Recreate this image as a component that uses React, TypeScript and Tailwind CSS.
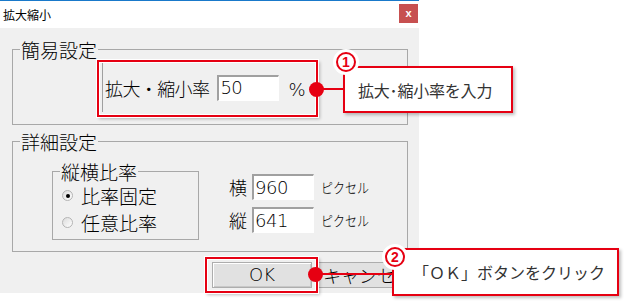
import React from 'react';

const RED = 'border-[#e60012]';
const THIN = "font-['DejaVu_Sans',sans-serif] font-extralight";

function Field({ value }: { value: string }) {
  return (
    <div className={`w-[62px] h-[26px] bg-white border-t-2 border-l-2 border-t-[#a0a0a0] border-l-[#a0a0a0] border-b border-r border-b-white border-r-white flex items-center pl-[1px] text-[18px] leading-none text-black tracking-[-0.5px] ${THIN}`}>
      {value}
    </div>
  );
}

function Radio({ checked, label }: { checked?: boolean; label: string }) {
  return (
    <div className="flex items-center h-[27px]">
      <div className="w-[11px] h-[11px] rounded-full border border-[#b4b4b4] bg-gradient-to-br from-[#dcdcdc] to-white flex items-center justify-center">
        {checked && <div className="w-[4px] h-[4px] rounded-full bg-black" />}
      </div>
      <span className="ml-[8px] text-[19px] leading-none">{label}</span>
    </div>
  );
}

function Group({ label, className, children }: { label: string; className: string; children: React.ReactNode }) {
  return (
    <div className={`relative border border-[#a8a8a8] ${className}`}>
      <span className="absolute -top-[10px] left-[7px] px-[1px] bg-[#f0f0f0] text-[19px] leading-[19px]">{label}</span>
      {children}
    </div>
  );
}

function Badge({ n, className }: { n: string; className: string }) {
  return (
    <div className={`absolute w-[26px] h-[26px] rounded-full bg-white flex items-center justify-center ${className}`}>
      <div className="w-[20px] h-[20px] rounded-full border-2 border-[#e60012] flex items-center justify-center text-[#e60012] font-bold text-[14px] leading-none font-['Liberation_Sans',sans-serif]">
        {n}
      </div>
    </div>
  );
}

export default function App() {
  return (
    <div className="relative w-[625px] h-[301px] bg-white overflow-hidden text-black font-light font-['Noto_Sans_CJK_JP',sans-serif]">
      {/* dialog window */}
      <div className="w-[419px] border-t border-[#1979ca]">
        <div className="h-[27px] flex items-center justify-between pl-[3px]">
          <span className="text-[12px] leading-none font-normal">拡大縮小</span>
          <div className="w-[19px] h-[19px] mr-[1px] mt-[-3px] bg-[#c75050] flex items-center justify-center text-white text-[11px] font-bold leading-none font-['Liberation_Sans',sans-serif]">
            x
          </div>
        </div>
        <div className="h-[265px] bg-[#f0f0f0] pl-[12px] pt-[21px] flex flex-col">
          <Group label="簡易設定" className="w-[396px] h-[76px]">
            <div className="ml-[89px] mt-[12px] w-[212px] h-[50px] border-l border-t border-[#a0a0a0] flex items-center">
              <span className="ml-[2px] text-[18px] leading-none tracking-[-0.6px]">拡大・縮小率</span>
              <div className="ml-[8px]">
                <Field value="50" />
              </div>
              <span className={`ml-[9px] mt-[4px] text-[18px] leading-none ${THIN}`}>%</span>
            </div>
          </Group>

          <Group label="詳細設定" className="mt-[16px] w-[396px] h-[111px]">
            <div className="flex">
              <Group label="縦横比率" className="ml-[39px] mt-[29px] w-[147px] h-[69px]">
                <div className="pl-[9px] pt-[10px]">
                  <Radio checked label="比率固定" />
                  <Radio label="任意比率" />
                </div>
              </Group>
              <div className="ml-[30px] mt-[32px] flex flex-col gap-[7px]">
                <div className="flex items-center">
                  <span className="text-[18px] leading-none w-[23px]">横</span>
                  <Field value="960" />
                  <span className="ml-[7px] text-[12px] leading-none scale-y-[1.15] origin-left">ピクセル</span>
                </div>
                <div className="flex items-center">
                  <span className="text-[18px] leading-none w-[23px]">縦</span>
                  <Field value="641" />
                  <span className="ml-[7px] text-[12px] leading-none scale-y-[1.15] origin-left">ピクセル</span>
                </div>
              </div>
            </div>
          </Group>

          <div className="mt-[10px] ml-[200px] flex gap-[6px]">
            <div className={`w-[100px] h-[26px] bg-[#e1e1e1] border border-[#adadad] shadow-[inset_1px_1px_0_white,inset_-1px_-1px_0_#c8c8c8] flex items-center justify-center text-[18px] leading-none ${THIN}`}>
              OK
            </div>
            <div className="w-[100px] h-[26px] bg-[#e1e1e1] border border-[#adadad] flex items-center justify-center text-[18px] leading-none">
              キャンセル
            </div>
          </div>
        </div>
      </div>

      {/* annotation: highlight 1 */}
      <div className={`absolute left-[97px] top-[60px] w-[221px] h-[57px] border-2 ${RED} shadow-[0_0_0_1px_white,2px_2px_3px_rgba(0,0,0,0.25)]`}>
        <div className="w-full h-full border border-white" />
      </div>
      <div className="absolute left-[317px] top-[88px] w-[28px] h-[2px] bg-[#e60012]" />
      <div className="absolute left-[309px] top-[82px] w-[15px] h-[15px] rounded-full bg-[#e60012]" />
      <div className={`absolute left-[343px] top-[66px] w-[170px] h-[47px] bg-white border-2 ${RED} shadow-[2px_2px_3px_rgba(0,0,0,0.25)] flex items-center pl-[13px] text-[16px] leading-none font-normal text-[#333] tracking-[-0.2px]`}>
        拡大･縮小率を入力
      </div>
      <Badge n="1" className="left-[333px] top-[49px]" />

      {/* annotation: highlight 2 */}
      <div className={`absolute left-[205px] top-[257px] w-[113px] h-[36px] border-2 ${RED} shadow-[0_0_0_1px_white,2px_2px_3px_rgba(0,0,0,0.25)]`}>
        <div className="w-full h-full border border-white" />
      </div>
      <div className="absolute left-[316px] top-[273px] w-[78px] h-[2px] bg-[#e60012]" />
      <div className="absolute left-[308px] top-[267px] w-[15px] h-[15px] rounded-full bg-[#e60012]" />
      <div className={`absolute left-[392px] top-[248px] w-[227px] h-[48px] bg-white border-2 ${RED} shadow-[2px_2px_3px_rgba(0,0,0,0.25)] flex items-center pl-[19px] text-[16px] leading-none font-normal text-[#333]`}>
        「ＯＫ」ボタンをクリック
      </div>
      <Badge n="2" className="left-[382px] top-[244px]" />
    </div>
  );
}
